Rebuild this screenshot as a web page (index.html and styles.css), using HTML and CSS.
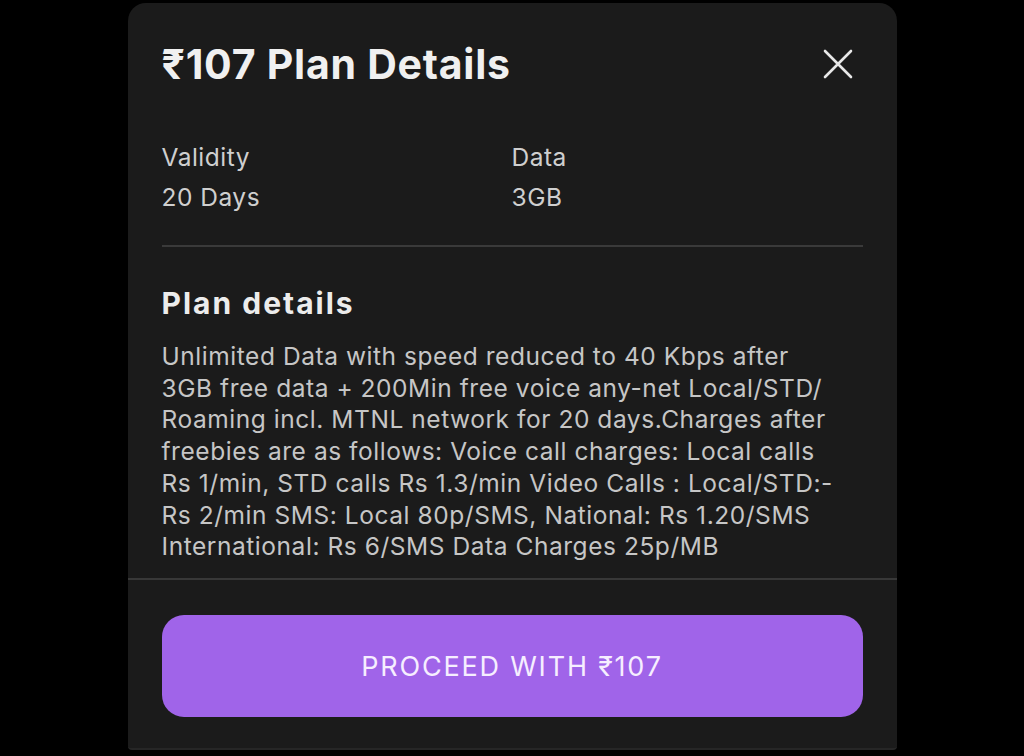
FILE: index.html
```html
<!DOCTYPE html>
<html lang="en">
<head>
<meta charset="utf-8">
<title>₹107 Plan Details</title>
<link rel="stylesheet" href="styles.css">
</head>
<body>
<div class="sheet">
  <div class="content">
    <div class="header">
      <h1 class="title">₹107 Plan Details</h1>
      <button class="close" aria-label="Close">
        <svg viewBox="0 0 30 30" width="30" height="30"><path d="M2 2 L28 28 M28 2 L2 28" stroke="#e8e8e8" stroke-width="2.6" stroke-linecap="round" fill="none"/></svg>
      </button>
    </div>
    <div class="info">
      <div class="info-col">
        <div class="label">Validity</div>
        <div class="value">20 Days</div>
      </div>
      <div class="info-col">
        <div class="label">Data</div>
        <div class="value">3GB</div>
      </div>
    </div>
    <div class="divider"></div>
    <h2 class="subtitle">Plan details</h2>
    <p class="desc">Unlimited Data with speed reduced to 40 Kbps after<br>3GB free data + 200Min free voice any-net Local/STD/<br>Roaming incl. MTNL network for 20 days.Charges after<br>freebies are as follows: Voice call charges: Local calls<br>Rs 1/min, STD calls Rs 1.3/min Video Calls : Local/STD:-<br>Rs 2/min SMS: Local 80p/SMS, National: Rs 1.20/SMS<br>International: Rs 6/SMS Data Charges 25p/MB</p>
  </div>
  <div class="footer">
    <button class="proceed">PROCEED WITH ₹107</button>
  </div>
</div>
</body>
</html>
```

FILE: styles.css
```css
html, body {
  margin: 0;
  padding: 0;
  background: #000;
}
body {
  font-family: Inter, "Noto Sans", "DejaVu Sans", sans-serif;
  height: 756px;
  overflow: hidden;
}
.sheet {
  width: 769px;
  margin: 3px auto 0;
  height: 747px;
  background: #1b1b1b;
  border-radius: 18px 18px 4px 4px;
  display: flex;
  flex-direction: column;
  box-sizing: border-box;
  border-bottom: 2px solid #262626;
}
.content {
  padding: 37px 34px 0;
}
.header {
  display: flex;
  align-items: center;
  justify-content: space-between;
  height: 48px;
}
.title {
  margin: 0;
  font-size: 41px;
  font-weight: 700;
  color: #f0f0f0;
  line-height: 48px;
  letter-spacing: 0.75px;
}
.close {
  width: 30px;
  height: 30px;
  padding: 0;
  margin-right: 10px;
  border: none;
  background: none;
  display: flex;
}
.info {
  display: grid;
  grid-template-columns: 350px 1fr;
  margin-top: 49px;
}
.label, .value {
  font-size: 24.5px;
  line-height: 40px;
  color: #cfcfcf;
  letter-spacing: 0.5px;
}
.divider {
  height: 2px;
  background: #3a3a3a;
  margin-top: 28px;
}
.subtitle {
  margin: 38px 0 0;
  font-size: 30px;
  font-weight: 700;
  line-height: 36px;
  color: #ececec;
  letter-spacing: 2px;
}
.desc {
  margin: 20px 0 0;
  font-size: 24.5px;
  line-height: 31.7px;
  color: #c6c6c6;
  white-space: nowrap;
  letter-spacing: 0.55px;
}
.footer {
  margin-top: auto;
  border-top: 2px solid #383838;
  padding: 35px 34px 31px;
}
.proceed {
  display: block;
  width: 100%;
  height: 102px;
  border: none;
  border-radius: 22px;
  background: #a064e9;
  color: #f6eeff;
  font-family: Inter, "Noto Sans", sans-serif;
  font-size: 27px;
  font-weight: 400;
  letter-spacing: 1.8px;
}
```
